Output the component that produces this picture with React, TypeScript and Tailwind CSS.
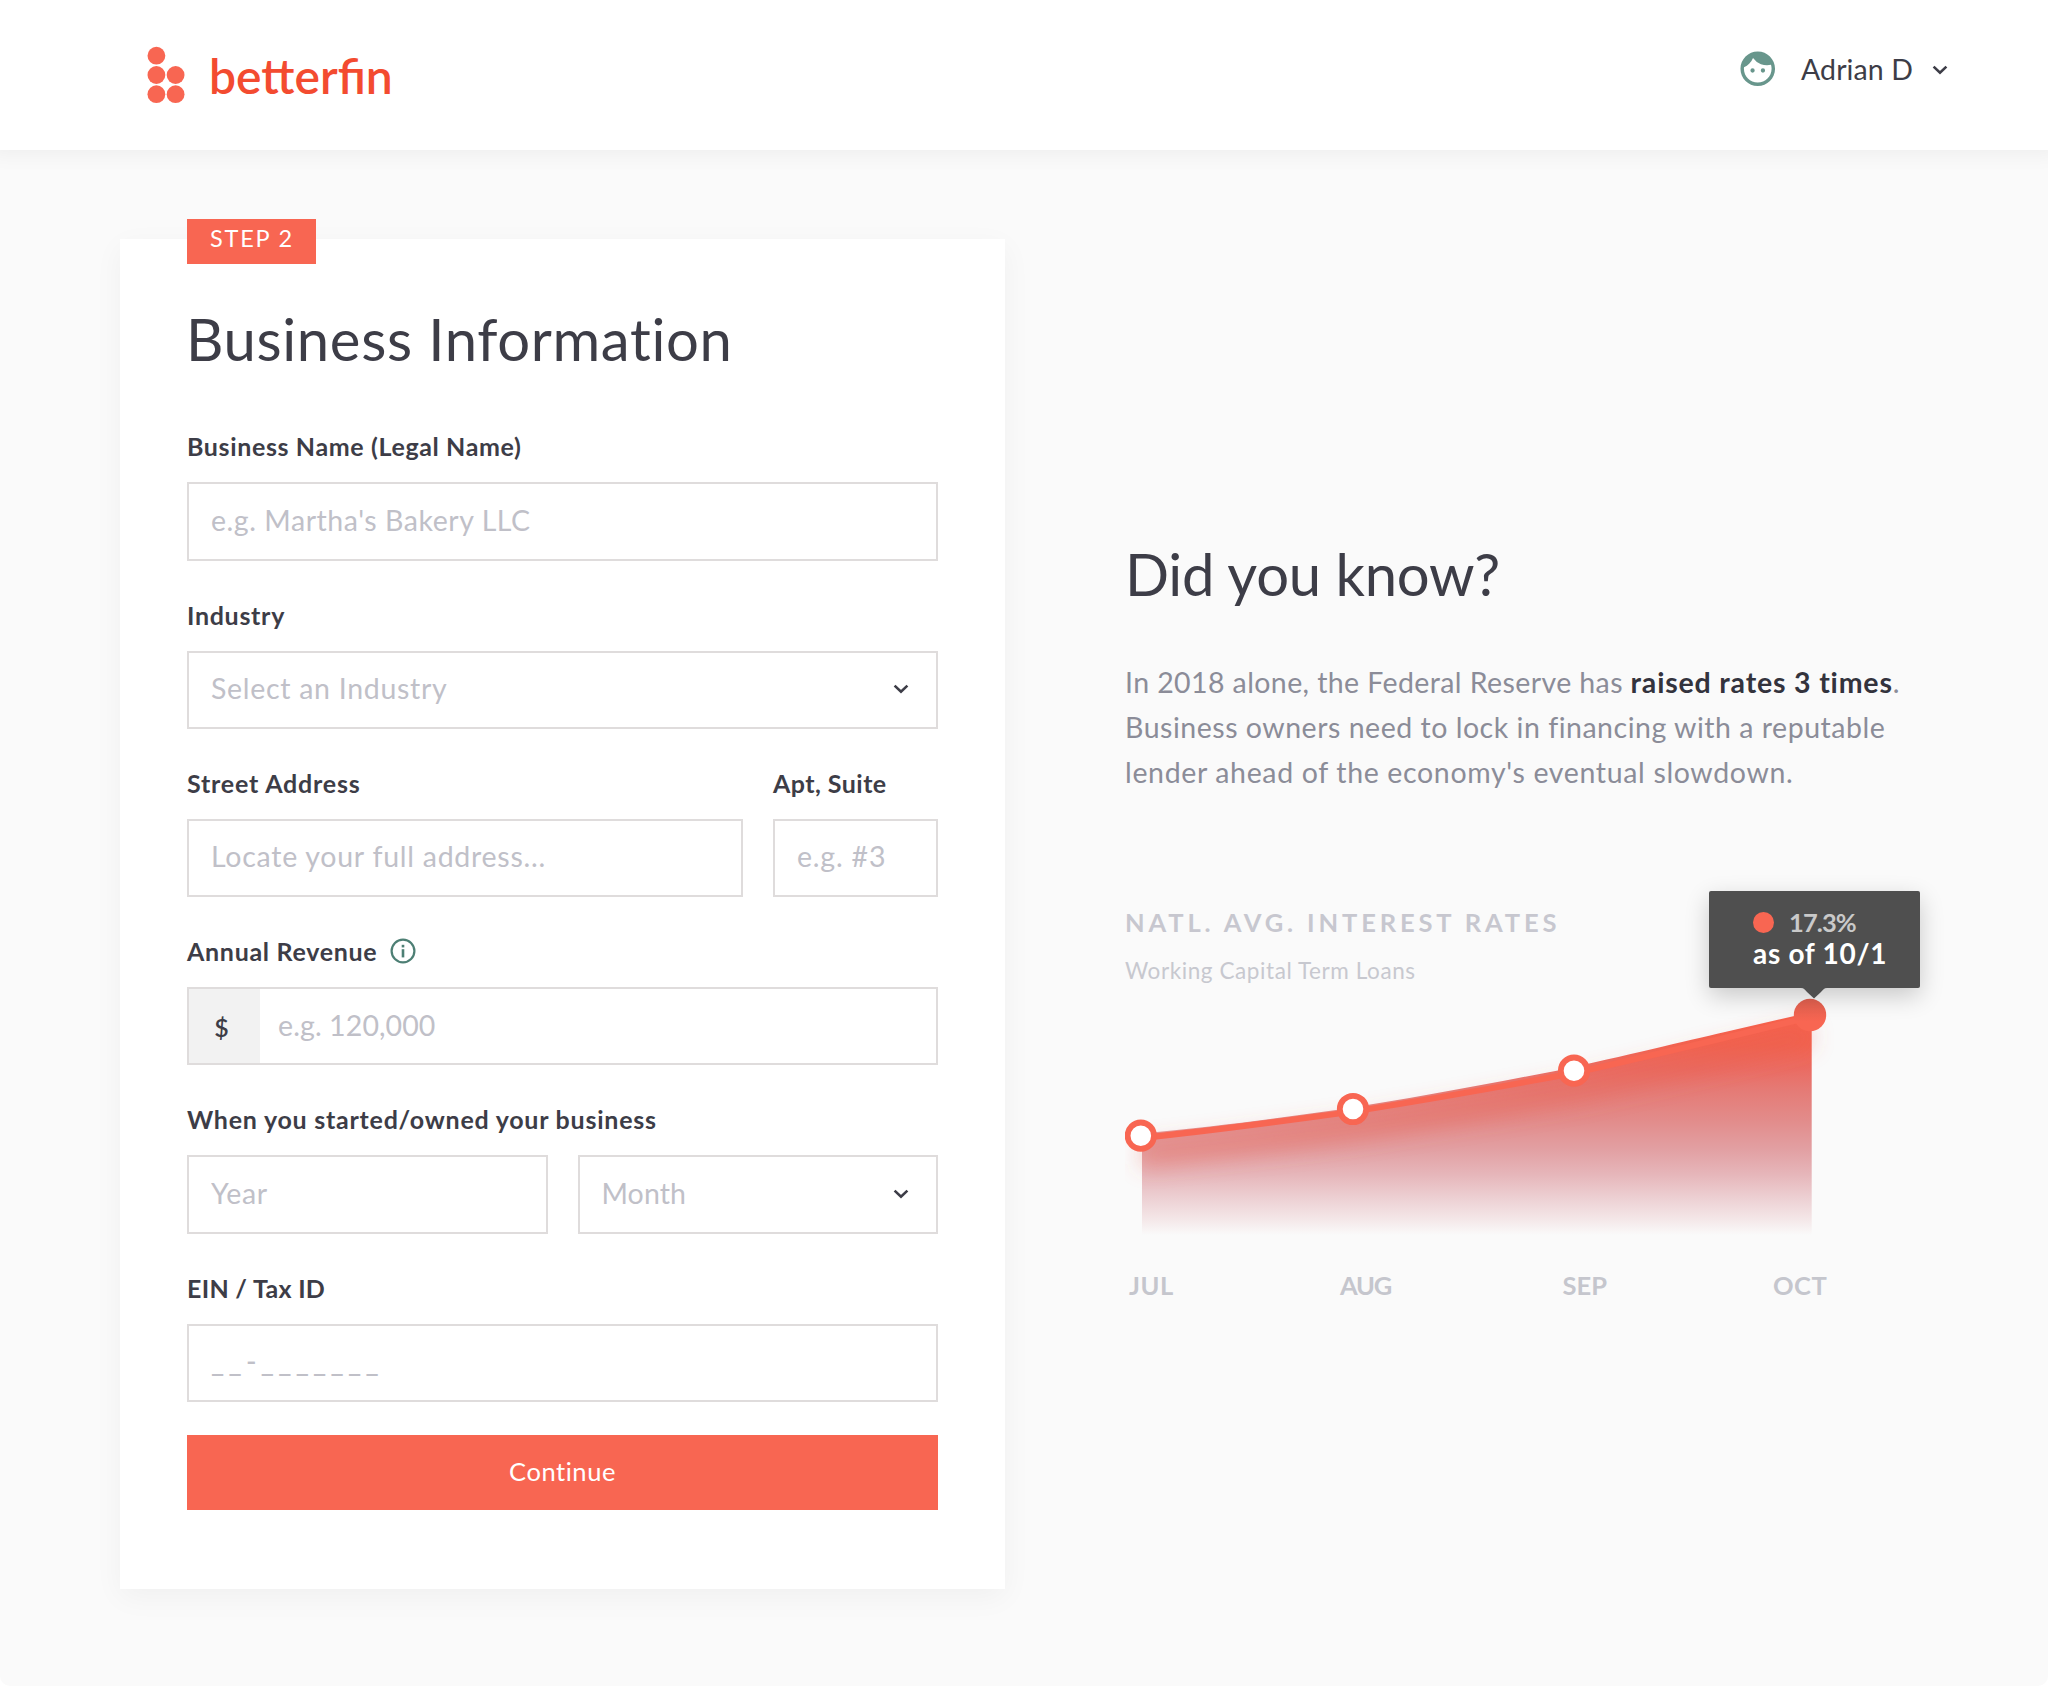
import type { ReactNode } from "react";
import { MdFace } from "react-icons/md";

function Chevron({ className = "" }: { className?: string }) {
  return (
    <svg viewBox="0 0 16 10" className={`h-[10px] w-[16px] shrink-0 ${className}`} fill="none">
      <path d="M1.6 1.6 L8 7.8 L14.4 1.6" stroke="#3d3d47" strokeWidth="2.6" />
    </svg>
  );
}

function LogoMark() {
  return (
    <svg viewBox="0 0 38 58" className="h-[58px] w-[38px] shrink-0" fill="#f86652">
      <circle cx="9.4" cy="9.7" r="8.9" />
      <circle cx="9.4" cy="29" r="8.9" />
      <circle cx="28.6" cy="29" r="8.9" />
      <circle cx="9.4" cy="48.2" r="8.9" />
      <circle cx="28.6" cy="48.2" r="8.9" />
    </svg>
  );
}

function InfoIcon() {
  return (
    <svg viewBox="0 0 26 26" className="ml-[13px] h-[26px] w-[26px] shrink-0" fill="none">
      <circle cx="13" cy="13" r="11.4" stroke="#4d7f74" strokeWidth="2.2" />
      <rect x="11.7" y="6.8" width="2.6" height="2.6" fill="#4d7f74" />
      <rect x="11.7" y="11.2" width="2.6" height="8.2" fill="#4d7f74" />
    </svg>
  );
}

function Field({ label, tracking, className = "", children }: { label: ReactNode; tracking: string; className?: string; children: ReactNode }) {
  return (
    <div className={className}>
      <div className={`mb-[22px] flex h-[28px] items-center text-[25px] leading-[28px] font-bold whitespace-nowrap text-[#3d3d47] ${tracking}`}>{label}</div>
      {children}
    </div>
  );
}

const box = "h-[78.25px] border-2 border-[#dfdcdc] bg-white";
const inputText = "pb-[3px] pl-[22px] text-[28.5px] text-[#c0c0c8] placeholder:text-[#c0c0c8] placeholder:opacity-100 outline-none";

function Input({ placeholder, tracking, className = "w-full" }: { placeholder: string; tracking: string; className?: string }) {
  return <input placeholder={placeholder} className={`block min-w-0 rounded-none ${box} ${inputText} ${tracking} ${className}`} />;
}

function Select({ placeholder, tracking, className = "w-full" }: { placeholder: string; tracking: string; className?: string }) {
  return (
    <div className={`flex items-center justify-between pr-[27px] ${box} ${inputText} ${tracking} ${className}`}>
      <span>{placeholder}</span>
      <Chevron className="mt-[2px]" />
    </div>
  );
}

function Header() {
  return (
    <header className="relative flex h-[150px] items-center justify-between bg-white pr-[100px] pl-[147px] shadow-[0_-6px_20px_10px_rgba(0,0,0,0.05)]">
      <div className="flex items-center">
        <LogoMark />
        <span className="ml-[24px] pt-[2px] text-[48px] leading-[58px] font-semibold text-[#f34b30]">betterfin</span>
      </div>
      <div className="mb-[12px] flex items-center">
        <MdFace className="size-[41.5px] text-[#68968c]" />
        <span className="ml-[22.5px] text-[28.5px] leading-[34px] tracking-[0.1px] text-[#3d3d47]">Adrian D</span>
        <Chevron className="mt-[2px] ml-[19px]" />
      </div>
    </header>
  );
}

function BusinessForm() {
  return (
    <section className="relative h-[1350px] w-[885px] shrink-0 bg-white px-[67px] pt-[64.5px] shadow-[0_8px_28px_rgba(0,0,0,0.045)]">
      <div className="absolute -top-[20px] left-[67px] flex h-[45px] w-[129px] items-center justify-center bg-[#f86652] pb-[5px] pl-[1px] text-[23.5px] tracking-[1.8px] text-white">
        STEP 2
      </div>
      <h1 className="-ml-[1px] text-[58px] leading-[70px] tracking-[0.65px] text-[#3d3d47]">Business Information</h1>
      <form className="mt-[58.8px] flex flex-col gap-10">
        <Field label="Business Name (Legal Name)" tracking="tracking-[0.63px]">
          <Input placeholder="e.g. Martha's Bakery LLC" tracking="tracking-[0.55px]" />
        </Field>
        <Field label="Industry" tracking="tracking-[0.7px]">
          <Select placeholder="Select an Industry" tracking="tracking-[0.7px]" />
        </Field>
        <div className="flex gap-[30px]">
          <Field label="Street Address" tracking="tracking-[0.8px]" className="w-[556px]">
            <Input placeholder="Locate your full address..." tracking="tracking-[0.74px]" />
          </Field>
          <Field label="Apt, Suite" tracking="tracking-[0.45px]" className="flex-1">
            <Input placeholder="e.g. #3" tracking="tracking-[0.8px]" />
          </Field>
        </div>
        <Field label={<>Annual Revenue<InfoIcon /></>} tracking="tracking-[0.7px]">
          <div className={`flex ${box}`}>
            <div className="flex w-[71px] shrink-0 items-center justify-center bg-[#f2f2f2] pt-[3px] pr-[6px] text-[25px] font-semibold text-[#3d3d47]">$</div>
            <input placeholder="e.g. 120,000" className="min-w-0 flex-1 pb-[2px] pl-[18px] text-[28.5px] tracking-[0.1px] outline-none placeholder:text-[#c0c0c8] placeholder:opacity-100" />
          </div>
        </Field>
        <Field label="When you started/owned your business" tracking="tracking-[0.76px]">
          <div className="flex gap-[30px]">
            <Input placeholder="Year" tracking="tracking-[0.6px]" className="w-[360.5px]" />
            <Select placeholder="Month" tracking="tracking-[0.1px]" className="w-[360.5px]" />
          </div>
        </Field>
        <Field label="EIN / Tax ID" tracking="tracking-[0.3px]">
          <Input placeholder="__-_______" tracking="tracking-[4.3px] font-medium" />
        </Field>
      </form>
      <button className="mt-[33.5px] flex h-[75px] w-full items-center justify-center bg-[#f86652] pb-[4px] text-[25.5px] tracking-[0.55px] text-white">Continue</button>
    </section>
  );
}

const curve = "M16 154 C90 146.5 150 138 228 127.6 C300 116 370 104 449 89 C530 71 600 54 685 33";

function RatesChart() {
  return (
    <svg viewBox="0 0 796 256" className="-ml-[2px] block h-[256px] w-[796px]" fill="none">
      <defs>
        <linearGradient id="area" gradientUnits="userSpaceOnUse" x1="0" y1="27" x2="0" y2="251">
          <stop offset="0" stopColor="#f8604a" />
          <stop offset="0.15" stopColor="#f2624f" />
          <stop offset="0.26" stopColor="#ea6c63" />
          <stop offset="0.35" stopColor="#e57a75" />
          <stop offset="0.49" stopColor="#e28c8b" />
          <stop offset="0.62" stopColor="#e2a0a3" />
          <stop offset="0.73" stopColor="#e6b6ba" />
          <stop offset="0.84" stopColor="#edd1d4" />
          <stop offset="0.93" stopColor="#f4e7e8" />
          <stop offset="1" stopColor="#fafafa" />
        </linearGradient>
        <linearGradient id="marker" x1="0" y1="0" x2="0" y2="1">
          <stop offset="0" stopColor="#e0604f" />
          <stop offset="0.7" stopColor="#f86652" />
        </linearGradient>
        <filter id="glow" filterUnits="userSpaceOnUse" x="-60" y="-60" width="900" height="360">
          <feGaussianBlur stdDeviation="11" />
        </filter>
      </defs>
      <path d="M17 149.5 C90 142.5 150 134.5 211 126 C290 114 360 100.5 433 86.4 C500 72 560 57 600 48 L686.7 28 L686.7 251 L17 251 Z" fill="url(#area)" />
      <path d={curve} transform="translate(0 18)" stroke="#e8604f" strokeOpacity="0.42" strokeWidth="20" filter="url(#glow)" />
      <path d={curve} stroke="#f86652" strokeWidth="6" />
      <circle cx="15.8" cy="151.7" r="13.2" fill="#fff" stroke="#f86652" strokeWidth="5.8" />
      <circle cx="228" cy="125" r="13.2" fill="#fff" stroke="#f86652" strokeWidth="5.8" />
      <circle cx="449" cy="86.7" r="13.2" fill="#fff" stroke="#f86652" strokeWidth="5.8" />
      <circle cx="685" cy="31" r="16.2" fill="url(#marker)" />
    </svg>
  );
}

function Tooltip() {
  return (
    <div className="absolute -top-[16px] left-[582px] h-[97.5px] w-[210.5px] rounded-[2px] bg-[#4f4f4f] pt-[16px] pl-[44px] shadow-[0_8px_24px_rgba(0,0,0,0.2)]">
      <div className="flex h-[31.4px] items-center">
        <span className="size-[21px] rounded-full bg-[#f86652]" />
        <span className="ml-[15px] text-[25.5px] leading-[31px] font-bold tracking-[-0.9px] text-[#c9c9c9]">17.3%</span>
      </div>
      <div className="text-[28px] leading-[31.4px] font-bold tracking-[0.7px] whitespace-nowrap text-white">as of 10/1</div>
      <svg viewBox="0 0 26 11" className="absolute top-[97px] left-[92px] h-[11px] w-[26px]">
        <path d="M0 0 C3 0 4 2 6 4 L13 10.5 L20 4 C22 2 23 0 26 0 Z" fill="#4f4f4f" />
      </svg>
    </div>
  );
}

function DidYouKnow() {
  return (
    <aside className="ml-[122px] w-[797px] pt-[300px]">
      <h2 className="-ml-[2px] text-[58px] leading-[70px] tracking-[-0.25px] text-[#3d3d47]">Did you know?</h2>
      <p className="mt-[50.5px] -ml-[2px] text-[28.5px] leading-[45px] whitespace-nowrap text-[#8b8c98]">
        <span className="block tracking-[0.4px]">
          In 2018 alone, the Federal Reserve has <b className="font-bold tracking-[0.82px] text-[#33333d]">raised rates 3 times</b>.
        </span>
        <span className="block tracking-[0.52px]">Business owners need to lock in financing with a reputable</span>
        <span className="block tracking-[0.65px]">lender ahead of the economy's eventual slowdown.</span>
      </p>
      <div className="relative mt-[112px]">
        <div className="-ml-[2px] text-[25.5px] leading-[30px] font-bold tracking-[3.86px] text-[#c7c7cf]">NATL. AVG. INTEREST RATES</div>
        <div className="mt-[20.5px] -ml-[2px] text-[22.5px] leading-[27px] tracking-[0.58px] text-[#c7c8cf]">Working Capital Term Loans</div>
        <div className="-mt-[0.5px]">
          <RatesChart />
        </div>
        <Tooltip />
        <div className="mt-[30px] flex pl-[2px] text-[25.5px] leading-[30px] font-bold text-[#c5c6cd]">
          <span className="w-[211px] tracking-[0.6px]">JUL</span>
          <span className="w-[222.5px] tracking-[-1.2px]">AUG</span>
          <span className="w-[210.5px] tracking-[0px]">SEP</span>
          <span className="tracking-[0.5px]">OCT</span>
        </div>
      </div>
    </aside>
  );
}

export default function App() {
  return (
    <div className="h-[1686px] w-[2048px] overflow-hidden bg-white font-['Lato',sans-serif]">
      <div className="h-full overflow-hidden rounded-b-[10px] bg-[#fafafa]">
        <Header />
        <main className="flex pt-[89px] pl-[120px]">
          <BusinessForm />
          <DidYouKnow />
        </main>
      </div>
    </div>
  );
}
